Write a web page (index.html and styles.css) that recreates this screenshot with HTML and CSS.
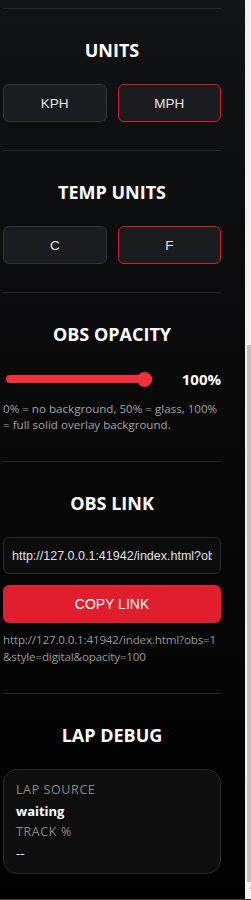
FILE: index.html
```html
<!DOCTYPE html>
<html lang="en">
<head>
    <meta charset="UTF-8">
    <meta name="viewport" content="width=device-width, initial-scale=1.0">
    <title>Overlay Settings</title>
    <link rel="stylesheet" href="styles.css">
</head>
<body>
    <div class="panel">
        <div class="section">
            <h2>UNITS</h2>
            <div class="toggle-row">
                <button class="toggle">KPH</button>
                <button class="toggle active">MPH</button>
            </div>
        </div>

        <div class="section">
            <h2>TEMP UNITS</h2>
            <div class="toggle-row">
                <button class="toggle">C</button>
                <button class="toggle active">F</button>
            </div>
        </div>

        <div class="section">
            <h2>OBS OPACITY</h2>
            <div class="slider-row">
                <input type="range" class="opacity-slider" min="0" max="100" value="100">
                <span class="slider-value">100%</span>
            </div>
            <p class="hint">0% = no background, 50% = glass, 100% = full solid overlay background.</p>
        </div>

        <div class="section">
            <h2>OBS LINK</h2>
            <input type="text" class="link-input" value="http://127.0.0.1:41942/index.html?obs=1&amp;style=digital&amp;opacity=100" readonly>
            <button class="copy-button">COPY LINK</button>
            <p class="link-text">http://127.0.0.1:41942/index.html?obs=1<br>&amp;style=digital&amp;opacity=100</p>
        </div>

        <div class="section">
            <h2>LAP DEBUG</h2>
            <div class="debug-box">
                <div class="debug-label">LAP SOURCE</div>
                <div class="debug-value strong">waiting</div>
                <div class="debug-label">TRACK %</div>
                <div class="debug-value">--</div>
            </div>
        </div>
    </div>

    <div class="scrollbar">
        <div class="scroll-thumb"></div>
        <div class="scroll-arrow"></div>
    </div>
</body>
</html>
```

FILE: styles.css
```css
body {
    font-family: 'Open Sans', sans-serif;
    background: linear-gradient(#121315, #0a0a0b 40%, #000000);
    margin: 0;
    padding: 0;
    height: 900px;
    display: flex;
    overflow: hidden;
    border-bottom: 1px solid #3a3a3a;
    box-sizing: border-box;
}

.panel {
    width: 245px;
    padding: 8px 24px 0 3px;
    box-sizing: border-box;
}

.section {
    border-top: 1px solid #26272a;
    padding: 29px 0 28px;
}

h2 {
    color: #ffffff;
    font-size: 18px;
    font-weight: 700;
    line-height: 24px;
    text-align: center;
    margin: 0 0 22px;
}

.toggle-row {
    display: flex;
    gap: 11px;
}

.toggle {
    flex: 1;
    height: 38px;
    background-color: #1b1c1f;
    border: 1px solid #34353a;
    border-radius: 6px;
    color: #e6e6e6;
    font-family: 'Liberation Sans', Arial, sans-serif;
    font-size: 13.5px;
    cursor: pointer;
}

.toggle.active {
    border-color: #d81d2b;
}

.slider-row {
    display: flex;
    align-items: center;
    height: 22px;
    padding-left: 3px;
}

.opacity-slider {
    -webkit-appearance: none;
    appearance: none;
    width: 146px;
    height: 16px;
    margin: 0;
    background: transparent;
}

.opacity-slider::-webkit-slider-runnable-track {
    height: 8px;
    border-radius: 4px;
    background: #f2303a;
}

.opacity-slider::-webkit-slider-thumb {
    -webkit-appearance: none;
    width: 15px;
    height: 15px;
    border-radius: 50%;
    background: #f2303a;
    margin-top: -3.5px;
}

.slider-value {
    margin-left: auto;
    color: #ffffff;
    font-size: 15px;
    font-weight: 700;
}

.hint,
.link-text {
    color: #a3a3a3;
    font-size: 11.6px;
    line-height: 16px;
    margin: 11px 0 0;
}

.link-text {
    color: #9a9a9a;
    line-height: 17px;
    margin-top: 8px;
    letter-spacing: -0.15px;
    white-space: nowrap;
}

.link-input {
    display: block;
    width: 100%;
    height: 37px;
    box-sizing: border-box;
    padding: 0 8px;
    background-color: #0c0c0d;
    border: 1px solid #2a2b2e;
    border-radius: 6px;
    color: #e0e0e0;
    font-family: 'Liberation Sans', Arial, sans-serif;
    font-size: 12.5px;
    outline: none;
}

.copy-button {
    display: block;
    width: 100%;
    height: 38px;
    margin-top: 11px;
    background-color: #e01e2d;
    border: none;
    border-radius: 6px;
    color: #ffffff;
    font-family: 'Liberation Sans', Arial, sans-serif;
    font-size: 14px;
    cursor: pointer;
}

.debug-box {
    background-color: #0e0e0f;
    border: 1px solid #2a2b2e;
    border-radius: 14px;
    padding: 10px 12px 9px;
}

.debug-label {
    color: #8a8a8a;
    font-size: 12.5px;
    letter-spacing: 0.6px;
    line-height: 20px;
}

.debug-value {
    color: #ffffff;
    font-size: 13px;
    line-height: 22px;
}

.debug-value.strong {
    font-weight: 700;
}

.scrollbar {
    width: 6px;
    background-color: #f1f1f1;
    display: flex;
    flex-direction: column;
}

.scroll-thumb {
    margin: 345px 0 0 2px;
    height: 537px;
    background-color: #c1c1c1;
}

.scroll-arrow {
    width: 2px;
    height: 2px;
    margin: 5px 0 0 5px;
    background-color: #a3a3a3;
}
```
